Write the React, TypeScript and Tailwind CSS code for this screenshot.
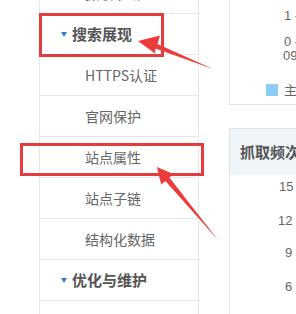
import React from "react";

const items: { label: string; header?: boolean }[] = [
  { label: "抓取诊断" },
  { label: "搜索展现", header: true },
  { label: "HTTPS认证" },
  { label: "官网保护" },
  { label: "站点属性" },
  { label: "站点子链" },
  { label: "结构化数据" },
  { label: "优化与维护", header: true },
  { label: "" },
];

function Row({ label, header }: { label: string; header?: boolean }) {
  if (header) {
    return (
      <div className="h-[41px] shrink-0 border-b border-[#e8e8e8] flex items-center pl-[21px]">
        <span className="w-0 h-0 border-l-[3.5px] border-r-[3.5px] border-t-[5px] border-l-transparent border-r-transparent border-t-[#2f7fd3] mr-[5px]" />
        <span className="text-[15px] font-bold text-[#555]">{label}</span>
      </div>
    );
  }
  return (
    <div className="h-[41px] shrink-0 border-b border-[#e8e8e8] flex items-center pl-[45px]">
      <span className="text-[14px] text-[#666]">{label}</span>
    </div>
  );
}

export default function App() {
  return (
    <div className="relative w-[296px] h-[314px] overflow-hidden bg-white flex font-['Noto_Sans_CJK_SC','Liberation_Sans',sans-serif]">
      <div className="w-[39px] shrink-0" />
      <div className="w-[160px] shrink-0 border-l border-r border-[#e8e8e8] mt-[-27px] flex flex-col">
        {items.map((it, i) => (
          <Row key={i} label={it.label} header={it.header} />
        ))}
      </div>
      <div className="w-[30px] shrink-0" />
      <div className="flex-1 flex flex-col">
        <div className="h-[105px] shrink-0 border-l border-b border-[#e3e3e3] flex flex-col text-[13px] text-[#666] font-['Liberation_Sans',sans-serif] leading-[14px]">
          <div className="pl-[54px] mt-[9px] whitespace-nowrap">1 -</div>
          <div className="pl-[54px] mt-[12px] whitespace-nowrap">0 -</div>
          <div className="pl-[53px] whitespace-nowrap">09</div>
          <div className="pl-[36px] mt-[20px] flex items-center whitespace-nowrap">
            <span className="w-[12px] h-[12px] bg-[#8dcdf5] mr-[6px] shrink-0" />
            <span className="font-['Noto_Sans_CJK_SC',sans-serif]">主要</span>
          </div>
        </div>
        <div className="mt-[23px] flex-1 border-l border-t border-[#e3e3e3] flex flex-col">
          <div className="h-[46px] shrink-0 bg-[#eef4fa] flex items-center pl-[10px]">
            <span className="text-[15px] font-bold text-[#555] whitespace-nowrap">抓取频次</span>
          </div>
          <div className="flex flex-col text-[13px] text-[#666] font-['Liberation_Sans',sans-serif] leading-[14px]">
            <div className="pl-[49px] mt-[5px] whitespace-nowrap">15 -</div>
            <div className="pl-[48px] mt-[20px] whitespace-nowrap">12 -</div>
            <div className="pl-[55px] mt-[18px] whitespace-nowrap">9 -</div>
            <div className="pl-[55px] mt-[20px] whitespace-nowrap">6 -</div>
          </div>
        </div>
      </div>

      <div className="absolute left-[39px] top-[13px] w-[125px] h-[44px] border-[3px] border-[#e53d3d]" />
      <div className="absolute left-[20px] top-[143px] w-[184px] h-[33px] border-[3px] border-[#e53d3d]" />

      <svg className="absolute left-0 top-0 pointer-events-none" width="296" height="314" viewBox="0 0 296 314">
        <polygon
          points="138,41 160,35.5 157.5,44 213,69 155.5,48.5 155,53.5"
          fill="#ec3b3b"
        />
        <polygon
          points="157,167 173.4,174 169.4,177.5 218,240 165.4,181 161.2,184.4"
          fill="#ec3b3b"
        />
      </svg>
    </div>
  );
}
